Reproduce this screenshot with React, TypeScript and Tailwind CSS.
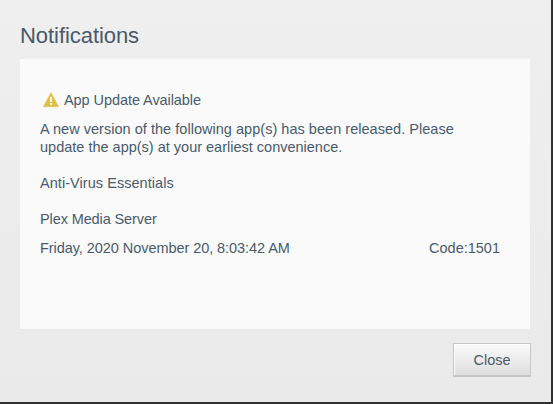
export default function App() {
  return (
    <div className="h-[404px] w-[553px] overflow-hidden border-r-2 border-b-2 border-[#303030] bg-linear-to-b from-[#efefef] to-[#eaeaea] font-['Liberation_Sans',Arial,sans-serif] text-[#485a6c]">
      <h1 className="h-[59px] pt-[21px] pl-5 text-[22px] leading-[30px] tracking-[-0.06px]">Notifications</h1>
      <main className="ml-5 h-[270px] w-[510px] bg-[#fafafa] px-5 pt-8 text-[14.5px] leading-[18px]">
        <div className="flex items-center">
          <svg className="mr-[6px] ml-[3px]" width="16" height="16" viewBox="0 0 16 16">
            <path d="M8 .8 15.7 14.7H.3Z" fill="#e0c047" stroke="#e0c047" strokeWidth=".5" strokeLinejoin="round" />
            <path d="M8 5v5M8 11v2" stroke="#fffdf0" strokeWidth="1.8" />
          </svg>
          <h2 className="-ml-px tracking-[-0.07px]">App Update Available</h2>
        </div>
        <div className="mt-[11px] whitespace-nowrap">
          <p className="tracking-[0.03px]">A new version of the following app(s) has been released. Please</p>
          <p>update the app(s) at your earliest convenience.</p>
          <p className="mt-[18px] tracking-[0.05px]">Anti-Virus Essentials</p>
          <p className="mt-[18px] tracking-[-0.11px]">Plex Media Server</p>
        </div>
        <div className="mt-[11px] flex justify-between pr-[10px]">
          <span className="tracking-[-0.06px]">Friday, 2020 November 20, 8:03:42 AM</span>
          <span>Code:1501</span>
        </div>
      </main>
      <div className="mt-[14px] flex justify-end pr-5">
        <button className="h-[34px] w-[78px] border border-b-2 border-[#c6c6c6] bg-linear-to-b from-[#fafafa] to-[#dedede] pt-[2px] text-[14.5px] shadow-[inset_1px_1px_0_#fff]">Close</button>
      </div>
    </div>
  );
}
